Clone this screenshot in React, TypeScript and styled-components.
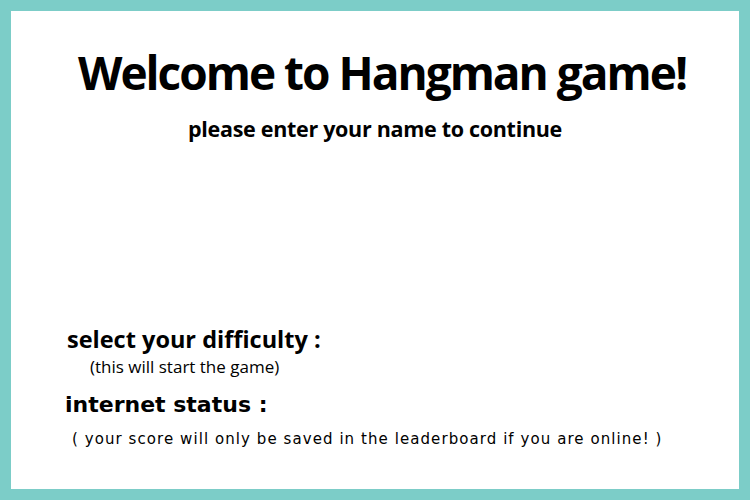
import React from "react";
import styled, { createGlobalStyle } from "styled-components";

const Global = createGlobalStyle`
  html, body { margin: 0; padding: 0; }
  body { background: #7ccdc8; }
`;

const Frame = styled.div`
  box-sizing: border-box;
  width: 750px;
  height: 500px;
  padding: 11px;
  background: #7ccdc8;
`;

const Card = styled.main`
  box-sizing: border-box;
  height: 100%;
  background: #ffffff;
  display: flex;
  flex-direction: column;
  color: #000;
`;

const Header = styled.header`
  display: flex;
  flex-direction: column;
  align-items: center;
  padding-top: 31px;
`;

const Title = styled.h1`
  margin: 0 0 0 14px;
  font-family: "Open Sans", sans-serif;
  font-weight: 700;
  font-size: 46px;
  letter-spacing: -2px;
  line-height: 60px;
`;

const Subtitle = styled.h3`
  margin: 14px 0 0 0;
  font-family: "Open Sans", sans-serif;
  font-weight: 700;
  font-size: 21.5px;
  letter-spacing: -0.3px;
  line-height: 26px;
`;

const Section = styled.section`
  margin-top: auto;
  padding: 0 0 40px 56px;
  display: flex;
  flex-direction: column;
`;

const Heading = styled.h3`
  margin: 0;
  font-family: "Open Sans", sans-serif;
  font-weight: 700;
  font-size: 23.5px;
  letter-spacing: 0px;
  line-height: 30px;
`;

const Note = styled.p<{ indent: number }>`
  margin: 2px 0 0 ${(p) => p.indent}px;
  font-family: "Open Sans", sans-serif;
  font-size: 17px;
  line-height: 22px;
`;

const StatusHeading = styled.h3`
  margin: 12px 0 0 -2px;
  font-family: "DejaVu Sans", sans-serif;
  font-weight: 700;
  font-size: 22px;
  line-height: 30px;
`;

const StatusNote = styled.p`
  margin: 9px 0 0 5px;
  font-family: "DejaVu Sans", sans-serif;
  font-size: 15px;
  letter-spacing: 1.07px;
  line-height: 20px;
`;

export default function App() {
  return (
    <>
      <Global />
      <Frame>
        <Card>
          <Header>
            <Title>Welcome to Hangman game!</Title>
            <Subtitle>please enter your name to continue</Subtitle>
          </Header>
          <Section>
            <Heading>select your difficulty :</Heading>
            <Note indent={23}>(this will start the game)</Note>
            <StatusHeading>internet status :</StatusHeading>
            <StatusNote>( your score will only be saved in the leaderboard if you are online! )</StatusNote>
          </Section>
        </Card>
      </Frame>
    </>
  );
}
